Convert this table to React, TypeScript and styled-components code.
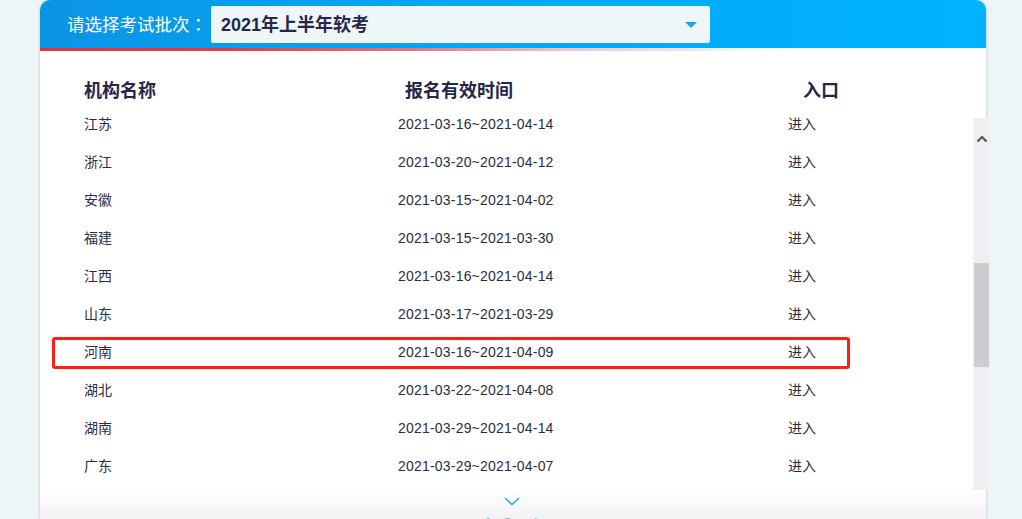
import React from "react";
import styled, { createGlobalStyle } from "styled-components";

const Global = createGlobalStyle`
  html, body {
    margin: 0;
    padding: 0;
    height: 100%;
    overflow: hidden;
    background: #edf5f8;
    font-family: "Liberation Sans", "Noto Sans CJK SC", sans-serif;
  }
`;

const Page = styled.div`
  padding: 0 36px 0 40px;
`;

const Card = styled.div`
  position: relative;
  width: 946px;
  height: 519px;
  background: #fff;
  border-radius: 10px 10px 0 0;
  box-shadow: 0 0 3px rgba(60, 80, 90, 0.35);
  display: flex;
  flex-direction: column;
`;

const Header = styled.div`
  flex-shrink: 0;
  height: 48px;
  border-radius: 10px 10px 0 0;
  background: linear-gradient(90deg, #0995e4 0%, #03a8f6 45%, #00b2ff 100%);
  display: flex;
  align-items: center;
  padding-left: 27px;
`;

const Label = styled.span`
  color: #fff;
  font-size: 17.5px;
  font-family: "Noto Sans CJK SC", sans-serif;
  line-height: 20px;
  width: 144px;
`;

const Colon = styled.span`
  font-family: "Noto Sans CJK TC", sans-serif;
`;

const Select = styled.div`
  width: 499px;
  height: 37px;
  margin-top: 1px;
  box-sizing: border-box;
  background: #eef6f8;
  border-radius: 2px;
  display: flex;
  align-items: center;
  justify-content: space-between;
  padding: 0 13px 0 10px;
`;

const SelectText = styled.span`
  font-size: 18px;
  font-weight: bold;
  color: #25264a;
  line-height: 20px;
`;

const Caret = styled.span`
  width: 0;
  height: 0;
  border-left: 6px solid transparent;
  border-right: 6px solid transparent;
  border-top: 6px solid #17a5ea;
`;

const RedLine = styled.div`
  flex-shrink: 0;
  height: 3px;
  background: linear-gradient(90deg, #e1323a 0%, #e33d44 20%, #e8767c 40%, #f3c2c5 55%, rgba(255, 255, 255, 0) 80%);
`;

const Columns = styled.div`
  display: grid;
  grid-template-columns: 314px 390px 1fr;
  padding-left: 44px;
`;

const HeadRow = styled(Columns)`
  flex-shrink: 0;
  padding-top: 29px;
  padding-bottom: 7px;
`;

const HeadCell = styled.div<{ $shift?: number }>`
  padding-left: ${(p) => p.$shift ?? 0}px;
  font-size: 18px;
  font-weight: bold;
  color: #25264a;
  line-height: 18px;
  height: 18px;
  font-family: "Noto Sans CJK SC", sans-serif;
`;

const List = styled.div`
  flex-shrink: 0;
  height: 385px;
  overflow: hidden;
`;

const Row = styled(Columns)<{ $mark?: boolean }>`
  position: relative;
  height: 38px;
  align-items: center;
  &::after {
    content: "";
    display: ${(p) => (p.$mark ? "block" : "none")};
    position: absolute;
    left: 12px;
    top: 4px;
    width: 798px;
    height: 32px;
    box-sizing: border-box;
    border: 3px solid #fc2014;
    border-radius: 3px;
  }
`;

const Cell = styled.div<{ $num?: boolean }>`
  font-size: 14px;
  color: #2b2c44;
  line-height: 18px;
  letter-spacing: ${(p) => (p.$num ? "0.2px" : "0")};
`;

const Footer = styled.div`
  flex: 1;
  min-height: 0;
  overflow: hidden;
  background: linear-gradient(180deg, #ffffff 0%, #f2f2f2 100%);
  display: flex;
  flex-direction: column;
  align-items: center;
  padding-top: 7px;
  padding-right: 2px;
`;

const More = styled.span`
  flex-shrink: 0;
  margin-top: 10px;
  font-size: 16px;
  line-height: 18px;
  color: #29a7ea;
  font-family: "Noto Sans CJK SC", sans-serif;
`;

const ScrollTrack = styled.div`
  position: absolute;
  top: 118px;
  right: -4px;
  width: 17px;
  height: 372px;
  background: #f0f0f0;
`;

const ScrollUp = styled.div`
  position: absolute;
  top: 17px;
  left: 2px;
  width: 13px;
  height: 10px;
  display: flex;
  justify-content: center;
`;

const ScrollThumb = styled.div`
  position: absolute;
  top: 145px;
  left: 1px;
  width: 15px;
  height: 104px;
  background: #cdcdcd;
`;

const rows: [string, string][] = [
  ["江苏", "2021-03-16~2021-04-14"],
  ["浙江", "2021-03-20~2021-04-12"],
  ["安徽", "2021-03-15~2021-04-02"],
  ["福建", "2021-03-15~2021-03-30"],
  ["江西", "2021-03-16~2021-04-14"],
  ["山东", "2021-03-17~2021-03-29"],
  ["河南", "2021-03-16~2021-04-09"],
  ["湖北", "2021-03-22~2021-04-08"],
  ["湖南", "2021-03-29~2021-04-14"],
  ["广东", "2021-03-29~2021-04-07"],
];

export default function App() {
  return (
    <Page>
      <Global />
      <Card>
        <Header>
          <Label>
            请选择考试批次<Colon>：</Colon>
          </Label>
          <Select>
            <SelectText>2021年上半年软考</SelectText>
            <Caret />
          </Select>
        </Header>
        <RedLine />
        <HeadRow>
          <HeadCell>机构名称</HeadCell>
          <HeadCell $shift={7}>报名有效时间</HeadCell>
          <HeadCell $shift={15}>入口</HeadCell>
        </HeadRow>
        <List>
          {rows.map(([name, date]) => (
            <Row key={name} $mark={name === "河南"}>
              <Cell>{name}</Cell>
              <Cell $num>{date}</Cell>
              <Cell>进入</Cell>
            </Row>
          ))}
        </List>
        <Footer>
          <svg width="16" height="9" viewBox="0 0 16 9" style={{ flexShrink: 0 }}>
            <path d="M1 1 L8 7.5 L15 1" fill="none" stroke="#29a7ea" strokeWidth="1.6" />
          </svg>
          <More>查看更多</More>
        </Footer>
        <ScrollTrack>
          <ScrollUp>
            <svg width="12" height="8" viewBox="0 0 12 8">
              <path d="M1.5 6.5 L6 2 L10.5 6.5" fill="none" stroke="#555" strokeWidth="2.2" />
            </svg>
          </ScrollUp>
          <ScrollThumb />
        </ScrollTrack>
      </Card>
    </Page>
  );
}
